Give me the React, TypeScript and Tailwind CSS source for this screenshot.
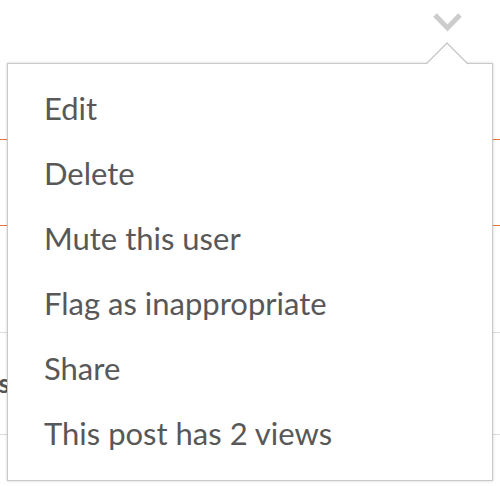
import React from 'react';

const items = ['Edit', 'Delete', 'Mute this user', 'Flag as inappropriate', 'Share', 'This post has 2 views'];

export default function App() {
  return (
    <div className="relative w-[500px] h-[486px] overflow-hidden bg-white" style={{ fontFamily: 'Lato, "Open Sans", sans-serif' }}>
      {/* page content behind the menu */}
      <div className="flex flex-col">
        <div className="h-[140px] border-b border-[#e8743b]" />
        <div className="h-[86px] border-b border-[#e8743b]" />
        <div className="h-[107px] border-b border-[#dddddd]" />
        <div className="h-[102px] border-b border-[#dddddd] flex items-center">
          <span className="-ml-[8px] text-[26px] font-bold text-[#555]">is</span>
        </div>
        <div className="flex-1 flex justify-end pr-[26px]">
          <div className="w-px h-full bg-[#dddddd]" />
        </div>
      </div>

      {/* toggle chevron */}
      <svg className="absolute left-[432px] top-[10px]" width="32" height="24" viewBox="0 0 32 24">
        <path d="M3 5 L15.5 18 L28 5" fill="none" stroke="#cccccc" strokeWidth="5" />
      </svg>

      {/* dropdown */}
      <div className="absolute left-[7px] top-[63px] w-[486px] h-[418px] bg-white border border-[#c8c8c8] shadow-[0_0_3px_rgba(0,0,0,0.18)]">
        <svg className="absolute left-[418px] -top-[22px]" width="42" height="23" viewBox="0 0 42 23">
          <polygon points="0,22.5 21,1 42,22.5" fill="#ffffff" />
          <polyline points="0,22 21,1 42,22" fill="none" stroke="#c0c0c0" strokeWidth="1.2" />
        </svg>
        <ul className="flex flex-col pt-[12px]">
          {items.map(item => (
            <li key={item} className="h-[65px] flex items-center pl-[36px] text-[31px] text-[#585858] leading-none">
              {item}
            </li>
          ))}
        </ul>
      </div>
    </div>
  );
}
